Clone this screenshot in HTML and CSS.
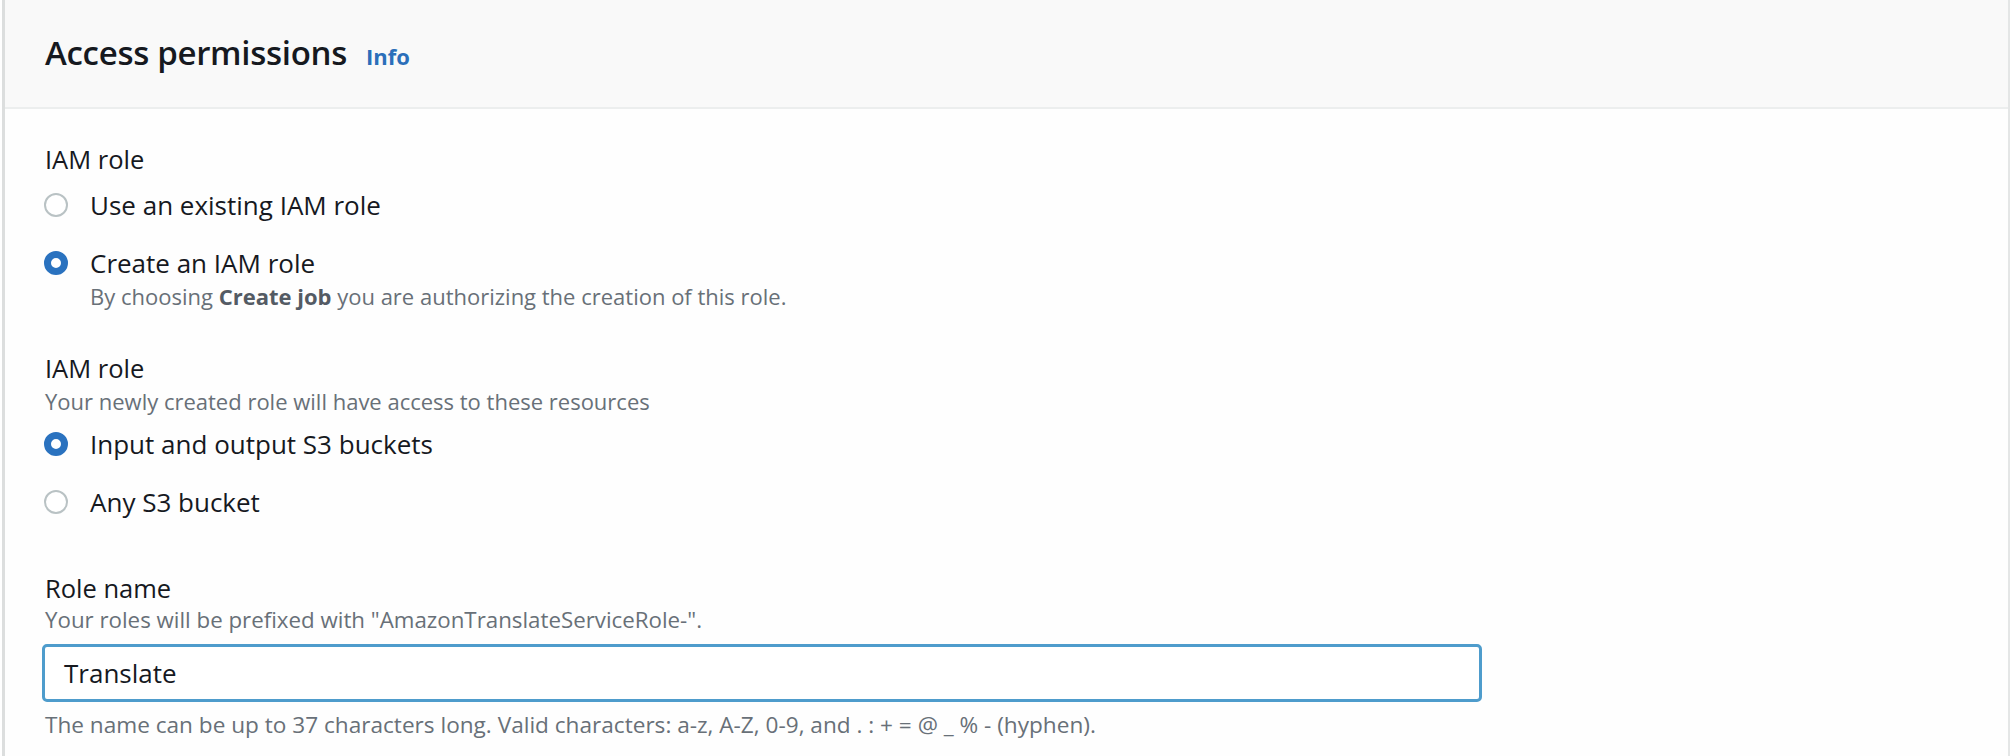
FILE: index.html
```html
<!DOCTYPE html>
<html lang="en">
<head>
<meta charset="utf-8">
<title>Access permissions</title>
<link rel="stylesheet" href="styles.css">
</head>
<body>
<section class="panel">
  <header class="panel-header">
    <h2 class="panel-title">Access permissions</h2>
    <a class="info-link" href="#">Info</a>
  </header>
  <div class="panel-body">
    <div class="field field-first">
      <div class="label">IAM role</div>
      <div class="radio-group">
        <label class="radio-row">
          <span class="radio"></span>
          <span class="radio-text">Use an existing IAM role</span>
        </label>
        <label class="radio-row radio-row-gap">
          <span class="radio radio-checked"></span>
          <span class="radio-text">Create an IAM role</span>
        </label>
        <div class="radio-desc">By choosing <b>Create job</b> you are authorizing the creation of this role.</div>
      </div>
    </div>

    <div class="field field-second">
      <div class="label">IAM role</div>
      <div class="desc">Your newly created role will have access to these resources</div>
      <div class="radio-group radio-group-tight">
        <label class="radio-row">
          <span class="radio radio-checked"></span>
          <span class="radio-text">Input and output S3 buckets</span>
        </label>
        <label class="radio-row radio-row-gap">
          <span class="radio"></span>
          <span class="radio-text">Any S3 bucket</span>
        </label>
      </div>
    </div>

    <div class="field field-third">
      <div class="label">Role name</div>
      <div class="desc">Your roles will be prefixed with "AmazonTranslateServiceRole-".</div>
      <div class="input">Translate</div>
      <div class="hint">The name can be up to 37 characters long. Valid characters: a-z, A-Z, 0-9, and . : + = @ _ % - (hyphen).</div>
    </div>
  </div>
</section>
</body>
</html>
```

FILE: styles.css
```css
* { box-sizing: border-box; }

html, body {
  margin: 0;
  padding: 0;
  background: #ffffff;
}

body {
  font-family: "Open Sans", "Noto Sans", sans-serif;
  color: #16191f;
}

.panel {
  margin-left: 2px;
  height: 756px;
  border-left: 3px solid #dcdede;
  border-right: 2px solid #e4e6e6;
  background: #fefefe;
}

.panel-header {
  display: flex;
  align-items: baseline;
  height: 109px;
  padding: 0 0 0 40px;
  background: #f9f9f9;
  border-bottom: 2px solid #eceeee;
}

.panel-title {
  margin: 0;
  padding-top: 33px;
  font-size: 33px;
  line-height: 40px;
  font-weight: 600;
  color: #16191f;
  letter-spacing: -0.3px;
}

.info-link {
  margin-left: 19px;
  font-size: 22px;
  font-weight: 700;
  color: #2b6fba;
  text-decoration: none;
}

.panel-body {
  padding: 35px 0 0 40px;
}

.label {
  font-size: 25.5px;
  line-height: 30px;
  color: #16191f;
}

.desc, .radio-desc, .hint {
  font-size: 22px;
  line-height: 26px;
  color: #687078;
}

.field-third .desc {
  font-size: 22.3px;
}

.hint {
  font-size: 22.6px;
}

.radio-desc b {
  font-weight: 700;
  color: #545b64;
}

.radio-group {
  display: flex;
  flex-direction: column;
  margin-top: 16px;
}

.radio-group-tight {
  margin-top: 15px;
}

.radio-row {
  display: flex;
  align-items: center;
  height: 30px;
}

.radio-row-gap {
  margin-top: 28px;
}

.radio {
  flex: none;
  width: 24px;
  height: 24px;
  margin-left: -1px;
  border-radius: 50%;
  border: 2px solid #b9c2c4;
  background: #ffffff;
}

.radio-checked {
  border: 7px solid #2a72bf;
}

.radio-text {
  margin-left: 22px;
  font-size: 26px;
  line-height: 30px;
}

.radio-desc {
  margin-top: 5px;
  margin-left: 45px;
}

.field-second {
  margin-top: 44px;
}

.field-second .desc {
  margin-top: 5px;
}

.field-third {
  margin-top: 56px;
}

.field-third .desc {
  margin-top: 4px;
}

.input {
  width: 1440px;
  height: 58px;
  margin-top: 11px;
  margin-left: -3px;
  padding-left: 19px;
  display: flex;
  align-items: center;
  border: 3px solid #4e9ccc;
  border-radius: 5px;
  font-size: 26px;
  color: #16191f;
  background: #ffffff;
}

.hint {
  margin-top: 10px;
}
```
